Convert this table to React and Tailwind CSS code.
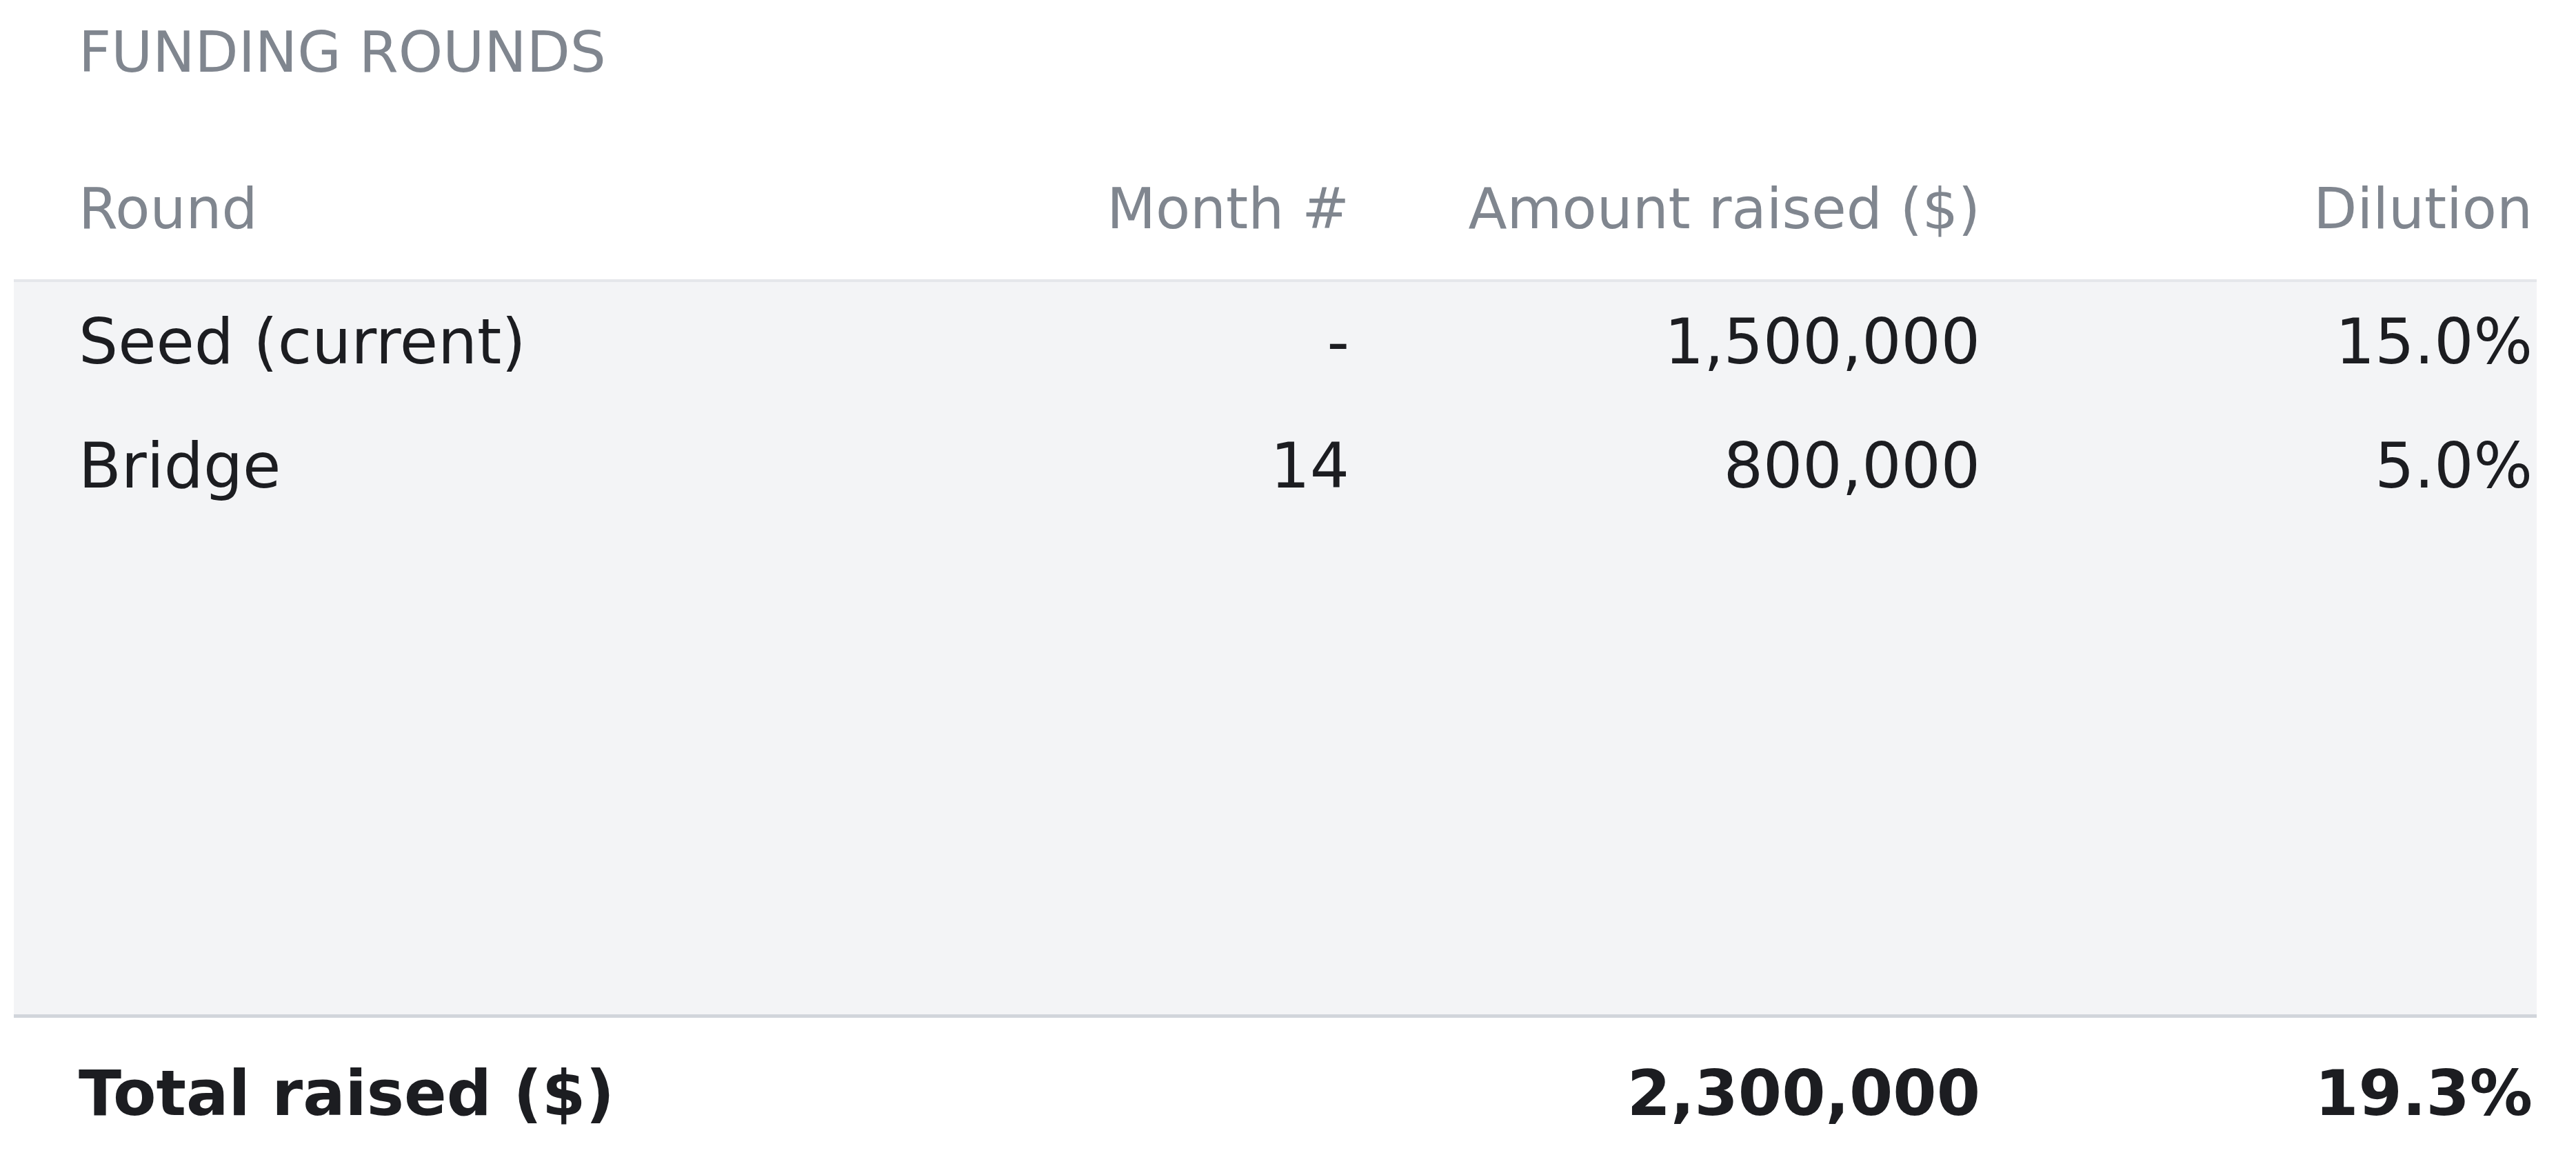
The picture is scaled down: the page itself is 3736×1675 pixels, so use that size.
export default function App() {
  const rows = [
    { round: "Seed (current)", month: "-", amount: "1,500,000", dilution: "15.0%" },
    { round: "Bridge", month: "14", amount: "800,000", dilution: "5.0%" },
  ];
  const grid = "grid grid-cols-[1283px_560px_915px_1fr]";
  return (
    <div
      className="w-[3736px] h-[1675px] bg-white overflow-hidden"
      style={{ fontFamily: '"DejaVu Sans", "Noto Sans", sans-serif' }}
    >
      <div className="ml-[20px] w-[3659px]">
        <div className="pl-[94px] pr-[6px] pt-[27px] text-[82px] leading-[98px] text-[#80868f]">
          FUNDING ROUNDS
        </div>
        <div className={`${grid} pl-[94px] pr-[6px] mt-[129px] pb-[53px] text-[82px] leading-[98px] text-[#80868f]`}>
          <div>Round</div>
          <div className="text-right">Month #</div>
          <div className="text-right">Amount raised ($)</div>
          <div className="text-right">Dilution</div>
        </div>
        <div className="h-[1071px] bg-[#f3f4f6] border-t-[4px] border-b-[5px] border-t-[#e5e7eb] border-b-[#d1d5db] pl-[94px] pr-[6px]">
          {rows.map((r) => (
            <div key={r.round} className={`${grid} text-[90px] leading-[174px] pb-[6px] text-[#1c1d21]`}>
              <div>{r.round}</div>
              <div className="text-right">{r.month}</div>
              <div className="text-right">{r.amount}</div>
              <div className="text-right">{r.dilution}</div>
            </div>
          ))}
        </div>
        <div className={`${grid} pl-[94px] pr-[6px] pt-[56px] text-[91px] leading-[108px] font-bold text-[#1c1d21]`}>
          <div>Total raised ($)</div>
          <div className="text-right"></div>
          <div className="text-right">2,300,000</div>
          <div className="text-right">19.3%</div>
        </div>
      </div>
    </div>
  );
}
